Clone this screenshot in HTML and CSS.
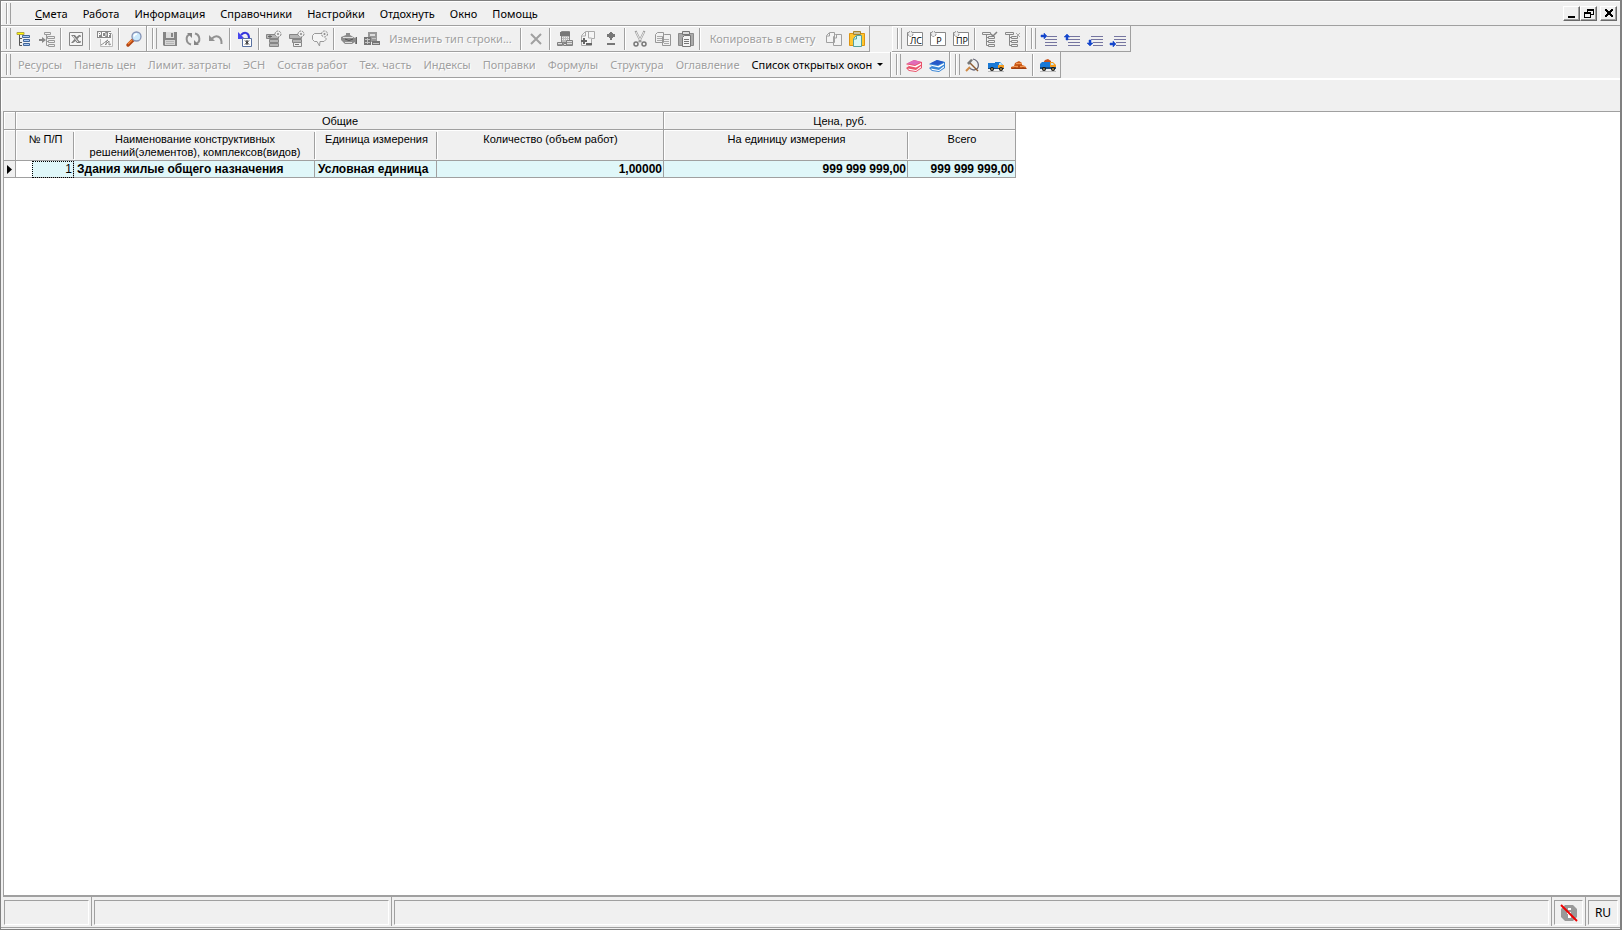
FILE: index.html
```html
<!DOCTYPE html>
<html lang="ru">
<head>
<meta charset="utf-8">
<title>Смета</title>
<link rel="stylesheet" href="styles.css">
</head>
<body>
<div class="window">
  <header class="menubar">
    <span class="grip"></span>
    <nav class="menu">
      <button class="menu-item"><u>С</u>мета</button>
      <button class="menu-item">Работа</button>
      <button class="menu-item">Информация</button>
      <button class="menu-item">Справочники</button>
      <button class="menu-item">Настройки</button>
      <button class="menu-item">Отдохнуть</button>
      <button class="menu-item">Окно</button>
      <button class="menu-item">Помощь</button>
    </nav>
    <div class="mdi">
      <button class="mdi-btn" aria-label="Свернуть"><svg viewBox="0 0 12 11"><path d="M2 8h7v2H2z"/></svg></button>
      <button class="mdi-btn" aria-label="Восстановить"><svg viewBox="0 0 12 11"><path d="M4 1h7v6H8V6h2V3H5v1H4zM1 4h7v6H1zM2 6v3h5V6z" fill-rule="evenodd"/></svg></button>
      <button class="mdi-btn mdi-close" aria-label="Закрыть"><svg viewBox="0 0 12 11"><path d="M2 1h2v1h1v1h2V2h1V1h2v2H9v1H8v2h1v1h1v2H8V8H7V7H5v1H4v1H2V7h1V6h1V4H3V3H2z"/></svg></button>
    </div>
  </header>

  <div class="toolbar">
    <div class="band"><span class="grip"></span>
      <button class="tool" aria-label="Дерево"><svg viewBox="0 0 16 16"><path d="M3.500 4v10.500H6M3.500 7.500H6M3.500 11.500H6" fill="none" stroke="#555"/><path d="M1 1.500h7v2H1z" fill="#ffff00" stroke="#b5a642"/><path d="M6.500 4.500h7v2h-7zM7.500 8.500h6v2h-6zM7.500 12.500h6v2h-6z" fill="#a9c8f4" stroke="#42679a"/></svg></button>
      <button class="tool" disabled aria-label="Вставить в дерево"><svg viewBox="0 0 16 16"><g fill="none" stroke="#999"><path d="M5.500 1.500h6v2h-6zM8.500 5.500h7v2h-7zM9.500 9.500h6v2h-6zM9.500 13.500h6v2h-6zM7.500 4v10.500H9M7.500 10.500H9"/></g><path d="M0 8h3V6l4 3-4 3v-2H0z" fill="#888"/></svg></button>
      <span class="sep"></span>
      <button class="tool" disabled aria-label="Excel"><svg viewBox="0 0 16 16"><path d="M1.500 1.500h13v13h-13z" fill="#f5f5f5" stroke="#858585"/><path d="M3 4h4l1.500 2L11 4h2L9.500 8l3.500 4H9L7.500 10 5 12H3l3.500-4z" fill="#808080"/><path d="M5 5l5 6" stroke="#eee"/><path d="M11 5.500h2M11 10.500h2" stroke="#999"/></svg></button>
      <span class="sep"></span>
      <button class="tool" disabled aria-label="PDF"><svg viewBox="0 0 16 16"><path d="M3.500 6V.500h9l3 3v12h-12V8" fill="#f8f8f8" stroke="#bbb"/><path d="M0 0h14v7H0z" fill="#888"/><path d="M1.500 6V1.500h2v2h-2M5.500 1v4.500H8l1-1V2.500L8 1.500H5.500M11.500 6V1.500H14M11.500 3.500H13" fill="none" stroke="#fff"/><path d="M4 14c2-1 5-4 7-5-2 1-2 3-2 5M8 14c1-1 3-3 4-4v4l2-1" fill="none" stroke="#888"/></svg></button>
      <span class="sep"></span>
      <button class="tool" aria-label="Поиск"><svg viewBox="0 0 16 16"><path d="M2 14L7 9" stroke="#b34513" stroke-width="3.500" stroke-linecap="round"/><path d="M2 13L6 9" stroke="#f58636" stroke-width="1.500"/><circle cx="10.500" cy="5.500" r="4.500" fill="#cce9fc" stroke="#8492b5" stroke-width="1.300"/><path d="M8 5.500Q8.500 3 11 3" fill="none" stroke="#fff" stroke-width="1.500"/></svg></button>
    </div>
    <div class="band"><span class="grip"></span>
      <button class="tool" disabled aria-label="Сохранить"><svg viewBox="0 0 16 16"><path d="M1 1h14v14H2l-1-1z" fill="#858585"/><path d="M4 1h8v6H4z" fill="#ddd"/><path d="M9 2h2v4H9z" fill="#858585"/><path d="M3 9h10v5H3z" fill="#d5d5d5"/><path d="M4 10.500h8M4 12.500h8" stroke="#b5b5b5"/></svg></button>
      <button class="tool" disabled aria-label="Обновить"><svg viewBox="0 0 16 16"><path d="M6 13.500C.500 12 .500 5 4.500 3.500M10 2.500C15.500 4 15.500 11 11.500 12.500" fill="none" stroke="#909090" stroke-width="2"/><path d="M2 2h5v5zM14 14H9V9z" fill="#858585"/></svg></button>
      <button class="tool" disabled aria-label="Отменить"><svg viewBox="0 0 16 16"><path d="M4 7.500C8 3.500 14 5 13.500 13" fill="none" stroke="#929292" stroke-width="2"/><path d="M1 4v6h6z" fill="#929292"/></svg></button>
      <span class="sep"></span>
      <button class="tool" aria-label="Пересчитать"><svg viewBox="0 0 16 16"><path d="M4 4C8 0 12 2 12 7" fill="none" stroke="#3636dc" stroke-width="2"/><path d="M1 1v7h7z" fill="#4646ee"/><path d="M5.500 7.500h9v8h-9z" fill="#fff" stroke="#5870a0"/><path d="M8 9.500l4 4M12 9.500l-4 4M10 9v5" stroke="#222"/></svg></button>
      <span class="sep"></span>
      <button class="tool" disabled aria-label="Добавить раздел"><svg viewBox="0 0 16 16"><path d="M.500 3.500h12v4H.500zM3.500 8.500h9v3h-9zM3.500 12.500h9v3h-9z" fill="#b5b5b5" stroke="#858585"/><path d="M2 5.500h4M4 4v3" stroke="#666"/><circle cx="12" cy="3" r="3" fill="#eee" stroke="#888" stroke-dasharray="2 1"/><circle cx="12" cy="3" r="1" fill="#888"/></svg></button>
      <button class="tool" disabled aria-label="Добавить строку"><svg viewBox="0 0 16 16"><path d="M.500 3.500h12v4H.500zM3.500 8.500h9v3h-9z" fill="#b5b5b5" stroke="#858585"/><path d="M4.500 11.500h8v4h-8z" fill="#eee" stroke="#888"/><path d="M6 13.500h4" stroke="#777"/><circle cx="12" cy="3" r="3" fill="#eee" stroke="#888" stroke-dasharray="2 1"/><circle cx="12" cy="3" r="1" fill="#888"/></svg></button>
      <button class="tool" disabled aria-label="Комментарий"><svg viewBox="0 0 16 16"><path d="M10 2.500H2.500l-2 2v4l2 2H5L7.500 15l.500-4.500h4l2-2V7" fill="#f5f5f5" stroke="#999"/><circle cx="12.500" cy="3" r="3" fill="#eee" stroke="#888" stroke-dasharray="2 1"/><circle cx="12.500" cy="3" r="1" fill="#888"/></svg></button>
      <span class="sep"></span>
      <button class="tool" disabled aria-label="Ресурсы"><svg viewBox="0 0 16 16"><path d="M0 6l5-2V2h4v2l5 3 1-1v7h-1v-2l-3 2H4l-3-3-1-1z" fill="#8c8c8c"/><path d="M2 6.500h10M4 11.500h7" stroke="#ddd" fill="none"/><path d="M4 8q4 3 8 0" stroke="#555" fill="none"/><path d="M15.500 6v7" stroke="#666"/></svg></button>
      <button class="tool" disabled aria-label="Машины"><svg viewBox="0 0 16 16"><path d="M4 1h9v10H4z" fill="#999"/><path d="M6 3h5v2H6z" fill="#ddd"/><path d="M0 6h7v8H0zM8 10h8v4H8z" fill="#777"/><path d="M1 8.500h5M1 11.500h5M9 12.500h6M8 7.500h4M3.500 7v6" stroke="#c5c5c5"/></svg></button>
      <button class="tool tool-text tool-type" disabled>Изменить тип строки...</button>
      <span class="sep"></span>
      <button class="tool" disabled aria-label="Удалить"><svg viewBox="0 0 16 16"><path d="M3 3l10 10M13 3L3 13" stroke="#a0a0a0" stroke-width="2"/></svg></button>
      <span class="sep"></span>
      <button class="tool" disabled aria-label="Калькулятор"><svg viewBox="0 0 16 16"><path d="M4.500.500h8v11h-8z" fill="#bbb" stroke="#888"/><path d="M3 1h10v4H3z" fill="#777"/><path d="M5 6.500h7M5 8.500h7" stroke="#eee" stroke-dasharray="1 1"/><path d="M.500 11.500h5v3h-5zM9.500 9.500h6v5h-6zM6.500 12.500h3v2h-3z" fill="#ddd" stroke="#808080"/><path d="M1 13.500h4M10 11.500h5M10 13.500h5" stroke="#999"/></svg></button>
      <button class="tool" disabled aria-label="Лист плюс"><svg viewBox="0 0 16 16"><path d="M5.500.500h9v7h-3v7h-10v-10z" fill="#f5f5f5" stroke="#aaa"/><path d="M5.500 1v4H2M8.500 1v6h3" fill="none" stroke="#aaa"/><path d="M1 10h6M4 7v6M6 13h6" stroke="#666" stroke-width="2"/></svg></button>
      <button class="tool" disabled aria-label="Плюс минус"><svg viewBox="0 0 16 16"><path d="M4 3h3V1h2v2h3v3H9v3H7V6H4zM4 12h8v2H4z" fill="#777"/><path d="M6 2h4v5H6z" fill="#777"/></svg></button>
      <span class="sep"></span>
      <button class="tool" disabled aria-label="Вырезать"><svg viewBox="0 0 16 16"><path d="M3.500 0l5.500 11M12.500 0L7 11" stroke="#999" fill="none" stroke-width="2"/><path d="M4 1l4 8M12 1L8 9" stroke="#eee"/><circle cx="4" cy="13" r="2" fill="none" stroke="#777" stroke-width="1.500"/><circle cx="12" cy="13" r="2" fill="none" stroke="#777" stroke-width="1.500"/></svg></button>
      <button class="tool" disabled aria-label="Копировать"><svg viewBox="0 0 16 16"><path d="M.500 3.500l2-2h6v10h-8zM7.500 5.500l2-2h6v11h-8z" fill="#f1f1f1" stroke="#969696"/><path d="M2 5.500h5M2 7.500h5M2 9.500h5M9 8.500h5M9 10.500h5M9 12.500h5" stroke="#aaa"/></svg></button>
      <button class="tool" disabled aria-label="Вставить"><svg viewBox="0 0 16 16"><path d="M.500 2.500h15v12H.500z" fill="#aaa" stroke="#8b8b8b"/><path d="M4.500.500h7v3h-7z" fill="#ddd" stroke="#777"/><path d="M4.500 6.500l2-2h6v11h-8z" fill="#f5f5f5" stroke="#777"/><path d="M6 8.500h5M6 10.500h5M6 12.500h5" stroke="#777"/></svg></button>
      <span class="sep"></span>
      <button class="tool tool-text tool-copy" disabled>Копировать в смету</button>
      <button class="tool" disabled aria-label="Копировать лист"><svg viewBox="0 0 16 16"><path d="M.500 4.500l3-3h5v10h-8zM7.500 5.500l2-2h6v11h-8z" fill="#f3f3f3" stroke="#a0a0a0"/><path d="M3.500 2v3H1M10.500 4v3H8" stroke="#a0a0a0" fill="none"/></svg></button>
      <button class="tool" aria-label="Вставить лист"><svg viewBox="0 0 16 16"><path d="M.500 2.500h15v12H.500z" fill="#ffc62e" stroke="#dd9411"/><path d="M4.500.500h7v3h-7z" fill="#c9c29b" stroke="#a4842e"/><path d="M4.500 7.500l3-3h5v11h-8z" fill="#d9f8f5" stroke="#559f9c"/><path d="M7.500 5v3H5" fill="none" stroke="#559f9c"/></svg></button>
    </div>
    <div class="band band-detached"><span class="grip"></span>
      <button class="tool" aria-label="Локальная смета"><svg viewBox="0 0 16 16"><path d="M.500 1.500h15v13H.500z" fill="#fff" stroke="#888"/><circle cx="3.500" cy="3" r="2.500" fill="#eee" stroke="#888" stroke-dasharray="2 1"/><text x="9" y="13" class="glyph">ЛС</text></svg></button>
      <button class="tool" aria-label="Раздел"><svg viewBox="0 0 16 16"><path d="M.500 1.500h15v13H.500z" fill="#fff" stroke="#888"/><circle cx="3.500" cy="3" r="2.500" fill="#eee" stroke="#888" stroke-dasharray="2 1"/><text x="9" y="13" class="glyph">Р</text></svg></button>
      <button class="tool" aria-label="Подраздел"><svg viewBox="0 0 16 16"><path d="M.500 1.500h15v13H.500z" fill="#fff" stroke="#888"/><circle cx="3.500" cy="3" r="2.500" fill="#eee" stroke="#888" stroke-dasharray="2 1"/><text x="9" y="13" class="glyph">ПР</text></svg></button>
      <span class="sep"></span>
      <button class="tool" disabled aria-label="Отметить ветвь"><svg viewBox="0 0 16 16"><path d="M.500 1.500h8v2h-8zM6.500 5.500h6v2h-6zM6.500 9.500h6v2h-6zM6.500 13.500h6v2h-6zM4.500 4v10.500H7M4.500 6.500H6M4.500 10.500H6" fill="none" stroke="#888"/><path d="M9 3l2 2 4-4" fill="none" stroke="#808080" stroke-width="1.500"/></svg></button>
      <button class="tool" disabled aria-label="Снять отметку"><svg viewBox="0 0 16 16"><path d="M.500 1.500h8v2h-8zM6.500 5.500h6v2h-6zM6.500 9.500h6v2h-6zM6.500 13.500h6v2h-6zM4.500 4v10.500H7M4.500 6.500H6M4.500 10.500H6" fill="none" stroke="#888"/><path d="M11 2l4 4M15 2l-4 4" stroke="#aaa"/></svg></button>
    </div>
    <div class="band"><span class="grip"></span>
      <button class="tool" aria-label="Уровень вправо вверх"><svg viewBox="0 0 16 16"><path d="M6 5.500h10M4 8.500h12M4 11.500h12M4 14.500h12" stroke="#7575a0"/><path d="M0 4h3V2l3 3-3 3V6H0z" fill="#1446cc" stroke="#1446cc" stroke-width=".500"/></svg></button>
      <button class="tool" aria-label="Вверх"><svg viewBox="0 0 16 16"><path d="M6 5.500h10M4 8.500h12M4 11.500h12M4 14.500h12" stroke="#7575a0"/><path d="M3 3l3 3H4v3H2V6H0z" fill="#1446cc" stroke="#1446cc" stroke-width=".500"/></svg></button>
      <button class="tool" aria-label="Вниз"><svg viewBox="0 0 16 16"><path d="M4 5.500h12M4 8.500h12M6 11.500h10M6 14.500h10" stroke="#7575a0"/><path d="M3 15l3-3H4V9H2v3H0z" fill="#1446cc" stroke="#1446cc" stroke-width=".500"/></svg></button>
      <button class="tool" aria-label="Уровень вправо вниз"><svg viewBox="0 0 16 16"><path d="M4 5.500h12M4 8.500h12M6 11.500h10M6 14.500h10" stroke="#7575a0"/><path d="M0 12h3v-2l3 3-3 3v-2H0z" fill="#1446cc" stroke="#1446cc" stroke-width=".500"/></svg></button>
    </div>
  </div>

  <div class="toolbar">
    <div class="band"><span class="grip"></span>
      <button class="tool tool-text" disabled>Ресурсы</button>
      <button class="tool tool-text" disabled>Панель цен</button>
      <button class="tool tool-text" disabled>Лимит. затраты</button>
      <button class="tool tool-text" disabled>ЭСН</button>
      <button class="tool tool-text" disabled>Состав работ</button>
      <button class="tool tool-text" disabled>Тех. часть</button>
      <button class="tool tool-text" disabled>Индексы</button>
      <button class="tool tool-text" disabled>Поправки</button>
      <button class="tool tool-text" disabled>Формулы</button>
      <button class="tool tool-text" disabled>Структура</button>
      <button class="tool tool-text" disabled>Оглавление</button>
      <button class="tool tool-text tool-drop">Список открытых окон<span class="caret"></span></button>
    </div>
    <div class="band"><span class="grip"></span>
      <button class="tool" aria-label="Красный справочник"><svg viewBox="0 0 16 16"><path d="M0 11l3-2-3-2 8-4 8 2v6l-6 4-7-1z" fill="#e9536a"/><path d="M2 11.500l8 1.500 5-4v1.500L10 14l-7-1z" fill="#fff"/><path d="M1 7.500l8 1.500 6-3v1.500L10 10.500 3 9z" fill="#fff"/><path d="M1 6.500L8 3l7 2-6 3z" fill="#e06cb9"/></svg></button>
      <button class="tool" aria-label="Синий справочник"><svg viewBox="0 0 16 16"><path d="M0 11l3-2-3-2 8-4 8 2v6l-6 4-7-1z" fill="#3985d5"/><path d="M2 11.500l8 1.500 5-4v1.500L10 14l-7-1z" fill="#fff"/><path d="M1 7.500l8 1.500 6-3v1.500L10 10.500 3 9z" fill="#fff"/><path d="M1 6.500L8 3l7 2-6 3z" fill="#2858c8"/></svg></button>
    </div>
    <div class="band"><span class="grip"></span>
      <button class="tool" aria-label="Работы"><svg viewBox="0 0 16 16"><path d="M8 2c7 2 7 10 1 11-2 0-3-1-5-2" fill="none" stroke="#667" stroke-width="1.300"/><path d="M5 6l8 8" stroke="#8d5b30" stroke-width="1.500"/><path d="M2 6l4-4 2 1-4 5z" fill="#777"/><path d="M5 10l-4 4" stroke="#d08a45" stroke-width="2"/></svg></button>
      <button class="tool" aria-label="Машины"><svg viewBox="0 0 16 16"><path d="M0 6h10v5H0z" fill="#1979d6"/><path d="M7 5h5l3 3h-5v3H7z" fill="#1979d6"/><path d="M11 6h2l1 2h-3z" fill="#bfe8f5"/><path d="M10 8h6v3h-6z" fill="#f59a1d"/><path d="M0 11h16v1H0z" fill="#164a7e"/><circle cx="4" cy="12" r="2" fill="#111"/><circle cx="13" cy="12" r="2" fill="#111"/><path d="M3 12h2M12 12h2" stroke="#eecb74"/><path d="M0 14.500h16" stroke="#bbb"/></svg></button>
      <button class="tool" aria-label="Материалы"><svg viewBox="0 0 16 16"><path d="M0 12v-2l3-1 1-3 4-2 3 2v2l3 1 2 3z" fill="#cd5b18"/><path d="M5 6.500h6M2 9.500h5M9 9.500h5" stroke="#f29a55"/><path d="M1 11.500h14M8 8v4M4 10v2M12 10v2" stroke="#9c3e10"/></svg></button>
      <span class="sep"></span>
      <button class="tool" aria-label="Перевозка"><svg viewBox="0 0 16 16"><path d="M3 6l2-3 3-1 3 2v2z" fill="#c9541b"/><path d="M0 7l2-2h8v6H0z" fill="#1979d6"/><path d="M10 5h3l3 3v3h-6z" fill="#f59a1d"/><path d="M11 6h2l1 2h-3z" fill="#bfe8f5"/><path d="M0 10h16v2H0z" fill="#164a7e"/><circle cx="4" cy="12" r="2" fill="#111"/><circle cx="13" cy="12" r="2" fill="#111"/><path d="M3 12h2M12 12h2" stroke="#eecb74"/><path d="M0 14.500h16" stroke="#bbb"/></svg></button>
    </div>
  </div>

  <div class="spacer"></div>

  <main class="sheet">
    <table class="grid">
      <colgroup><col class="c-mark"><col class="c-tree"><col class="c-num"><col class="c-name"><col class="c-unit"><col class="c-qty"><col class="c-price"><col class="c-total"></colgroup>
      <thead>
        <tr class="group"><th></th><th colspan="5">Общие</th><th colspan="2">Цена, руб.</th></tr>
        <tr class="heads"><th></th><th class="split" colspan="2">№ П/П</th><th class="split">Наименование конструктивных решений(элементов), комплексов(видов)</th><th class="split">Единица измерения</th><th>Количество (объем работ)</th><th class="split">На единицу измерения</th><th>Всего</th></tr>
      </thead>
      <tbody>
        <tr><td class="mark"><svg viewBox="0 0 5 9"><path d="M0 0l5 4.500L0 9z"/></svg></td><td class="tree"></td><td class="num focus">1</td><td>Здания жилые общего назначения</td><td>Условная единица</td><td class="num">1,00000</td><td class="num">999 999 999,00</td><td class="num">999 999 999,00</td></tr>
      </tbody>
    </table>
  </main>

  <footer class="status">
    <div class="pane pane-s"><span></span></div>
    <div class="pane pane-m"><span></span></div>
    <div class="pane pane-grow"><span></span></div>
    <div class="pane pane-icon"><span><svg viewBox="0 0 18 18"><path d="M5 1h8l4 4v8l-4 4H5l-4-4V5z" fill="#999"/><path d="M8 4h3v2H8zM7 8h4v6H8v-4H7z" fill="#fff"/><path d="M1 1l16 16" stroke="#f00000" stroke-width="2"/></svg></span></div>
    <div class="pane pane-lang"><span>RU</span></div>
  </footer>
</div>
</body>
</html>
```
FILE: styles.css
```css
* { box-sizing: border-box; }
body { margin: 0; background: #f0f0f0; color: #000; font: 11px/16px "Noto Sans", "Open Sans", sans-serif; }
button { font: inherit; color: inherit; background: none; border: 0; padding: 0; margin: 0; white-space: nowrap; }
svg { display: block; width: 16px; height: 16px; overflow: visible; }

.window { display: flex; flex-direction: column; height: 100vh; border: 1px solid #808080; border-right-width: 2px; }

.grip { display: flex; flex: none; width: 5px; height: 21px; margin: 0 1px 0 5px; border: solid #a0a0a0; border-width: 0 1px; background: linear-gradient(90deg, #fff 1px, transparent 1px); }

.menubar { display: flex; align-items: center; flex: none; height: 25px; border-bottom: 1px solid #a0a0a0; box-shadow: inset 1px 1px #fff; }
.menu { display: flex; flex: 1; gap: 3px; padding: 2px 0 0 17px; }
.menu-item { padding: 0 6px; }
.mdi { display: flex; padding-right: 3px; }
.mdi-btn { width: 17px; height: 15px; padding: 1px 2px; border: 1px solid; border-color: #fff #696969 #696969 #fff; box-shadow: inset -1px -1px #a0a0a0; }
.mdi-btn svg { width: 12px; height: 11px; shape-rendering: crispEdges; }
.mdi-close { margin-left: 3px; }

.toolbar { display: flex; flex: none; height: 26px; }
.band { display: flex; align-items: center; padding-right: 1px; border: solid #a0a0a0; border-width: 0 1px 1px 0; box-shadow: inset 1px 1px #fff; }
.band-detached { margin-left: 22px; }
.tool { display: flex; align-items: center; justify-content: center; flex: none; width: 23px; height: 22px; }
.tool:disabled { color: #a0a0a0; text-shadow: 1px 1px #fff; }
.tool-text { width: auto; padding: 0 6px; }
.tool-type { width: 135px; }
.tool-copy { width: 119px; }
.tool-drop { gap: 5px; }
.caret { border: solid transparent; border-width: 3px 3px 0; border-top-color: #000; }
.sep { flex: none; width: 6px; height: 22px; background: linear-gradient(90deg, transparent 2px, #a0a0a0 2px, #a0a0a0 3px, #fff 3px, #fff 4px, transparent 4px); }
.glyph { font: 9px "Open Sans", sans-serif; text-anchor: middle; }

.spacer { flex: none; height: 33px; border-top: 2px solid #fff; border-left: 1px solid #fff; }

.sheet { flex: 1; margin-left: 2px; background: #fff; border: solid #a0a0a0; border-width: 1px 0 2px 1px; overflow: hidden; }
.grid { table-layout: fixed; width: 1012px; border-collapse: separate; border-spacing: 0; font: 11px/13px "Liberation Sans", sans-serif; }
.c-mark { width: 12px; }
.c-tree { width: 16px; }
.c-num { width: 42px; }
.c-name { width: 241px; }
.c-unit { width: 122px; }
.c-qty { width: 227px; }
.c-price { width: 244px; }
.c-total { width: 108px; }
.grid th, .grid td { padding: 0 1px 0 2px; border: solid #a0a0a0; border-width: 0 1px 1px 0; white-space: nowrap; overflow: hidden; }
.grid th { background: #f0f0f0; box-shadow: inset 1px 1px #fff; font-weight: 400; }
.grid .group th { height: 18px; padding-top: 2px; }
.grid .heads th { height: 31px; padding-top: 3px; vertical-align: top; white-space: normal; }
.grid .heads .split { border-right: 0; background: linear-gradient(#a0a0a0, #a0a0a0) 100% 50% / 1px 27px no-repeat #f0f0f0; }
.grid td { height: 17px; padding-left: 3px; background: #e0f7f9; font-size: 12px; font-weight: 700; }
.grid .mark { padding: 0 3px; background: #f0f0f0; }
.mark svg { width: 5px; height: 9px; }
.grid .tree { background: #fff; border-right: 0; }
.grid .num { text-align: right; }
.grid .focus { font-weight: 400; outline: 1px dotted #000; outline-offset: -1px; }

.status { display: flex; flex: none; height: 31px; margin-bottom: 1px; padding: 0 0 1px 1px; border-bottom: 1px solid #a0a0a0; }
.pane { display: flex; padding: 3px 2px 1px; border-right: 1px solid #a0a0a0; }
.pane span { display: flex; flex: 1; align-items: center; justify-content: center; border: 1px solid; border-color: #a0a0a0 #fff #fff #a0a0a0; }
.pane svg { width: 18px; height: 18px; }
.pane-s { width: 90px; }
.pane-m { width: 300px; }
.pane-grow { flex: 1; }
.pane-icon { width: 34px; }
.pane-lang { width: 34px; border-right: 0; font-size: 12px; }
```
